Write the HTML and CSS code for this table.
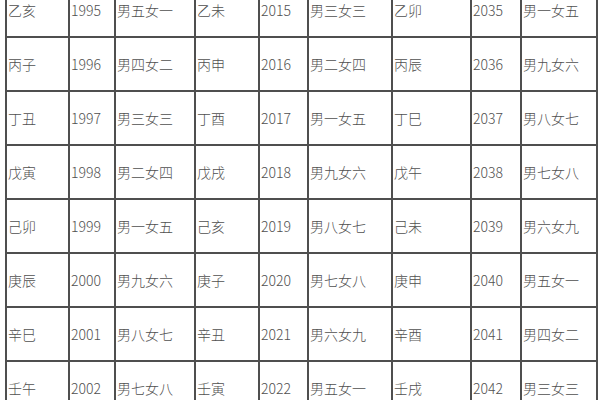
FILE: index.html
```html
<!DOCTYPE html>
<html lang="zh-CN">
<head>
<meta charset="utf-8">
<title>生肖年份表</title>
<link rel="stylesheet" href="styles.css">
</head>
<body>
<div class="frame">
<table class="chart">
<colgroup>
<col class="c1"><col class="c2"><col class="c3">
<col class="c4"><col class="c5"><col class="c6">
<col class="c7"><col class="c8"><col class="c9">
</colgroup>
<tbody>
<tr><td>乙亥</td><td>1995</td><td>男五女一</td><td>乙未</td><td>2015</td><td>男三女三</td><td>乙卯</td><td>2035</td><td>男一女五</td></tr>
<tr><td>丙子</td><td>1996</td><td>男四女二</td><td>丙申</td><td>2016</td><td>男二女四</td><td>丙辰</td><td>2036</td><td>男九女六</td></tr>
<tr><td>丁丑</td><td>1997</td><td>男三女三</td><td>丁酉</td><td>2017</td><td>男一女五</td><td>丁巳</td><td>2037</td><td>男八女七</td></tr>
<tr><td>戊寅</td><td>1998</td><td>男二女四</td><td>戊戌</td><td>2018</td><td>男九女六</td><td>戊午</td><td>2038</td><td>男七女八</td></tr>
<tr><td>己卯</td><td>1999</td><td>男一女五</td><td>己亥</td><td>2019</td><td>男八女七</td><td>己未</td><td>2039</td><td>男六女九</td></tr>
<tr><td>庚辰</td><td>2000</td><td>男九女六</td><td>庚子</td><td>2020</td><td>男七女八</td><td>庚申</td><td>2040</td><td>男五女一</td></tr>
<tr><td>辛巳</td><td>2001</td><td>男八女七</td><td>辛丑</td><td>2021</td><td>男六女九</td><td>辛酉</td><td>2041</td><td>男四女二</td></tr>
<tr><td>壬午</td><td>2002</td><td>男七女八</td><td>壬寅</td><td>2022</td><td>男五女一</td><td>壬戌</td><td>2042</td><td>男三女三</td></tr>
</tbody>
</table>
</div>
</body>
</html>
```
FILE: styles.css
```css
html, body {
  margin: 0;
  padding: 0;
  background: #ffffff;
}
.frame {
  width: 600px;
  height: 400px;
  overflow: hidden;
}
.chart {
  border-collapse: collapse;
  table-layout: fixed;
  width: 591px;
  margin-left: 5px;
  margin-top: -18px;
  font-family: "Noto Sans CJK SC", "Microsoft YaHei", sans-serif;
  font-size: 14px;
  font-weight: 300;
  color: #505050;
}
.chart td {
  border: 2px solid #4f4f4f;
  height: 52px;
  padding: 0 0 0 1px;
  vertical-align: middle;
  white-space: nowrap;
  overflow: hidden;
  line-height: 20px;
}
.c1 { width: 63px; }
.c2 { width: 46px; }
.c3 { width: 80px; }
.c4 { width: 64px; }
.c5 { width: 49px; }
.c6 { width: 84px; }
.c7 { width: 79px; }
.c8 { width: 50px; }
.c9 { width: 76px; }
```
